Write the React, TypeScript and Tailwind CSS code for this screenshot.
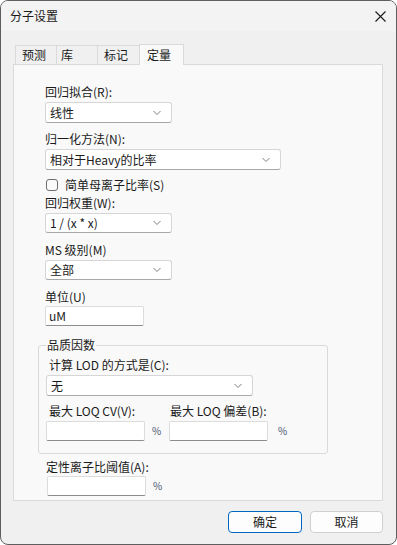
import React from "react";

const font = { fontFamily: '"Noto Sans CJK SC", "Noto Sans", sans-serif' };

function Chevron() {
  return (
    <svg width="8" height="5" viewBox="0 0 8 5" className="absolute right-[10px] top-1/2 -translate-y-1/2">
      <path d="M0.5 0.5 L4 4 L7.5 0.5" fill="none" stroke="#707070" strokeWidth="0.9" />
    </svg>
  );
}

function Select({ value, w, h = 21 }: { value: string; w: string; h?: number }) {
  return (
    <div
      className={`relative ${w} flex items-center bg-white border border-[#d6d6d6] border-b-[#a8a8a8] rounded-[3px] pl-[4px] text-[12px] text-[#1a1a1a]`}
      style={{ height: h }}
    >
      <span className="leading-none">{value}</span>
      <Chevron />
    </div>
  );
}

function Input({ value = "" }: { value?: string }) {
  return (
    <div className="w-[99px] h-[20px] flex items-center bg-white border border-[#dcdcdc] border-b-[#8c8c8c] rounded-[2px] pl-[3px] text-[12px] text-[#1a1a1a] leading-none">
      {value}
    </div>
  );
}

function Label({ children, className = "" }: { children: React.ReactNode; className?: string }) {
  return <div className={`h-[16px] leading-[16px] text-[12px] text-[#1a1a1a] ${className}`}>{children}</div>;
}

function Pct() {
  return <span className="text-[10px] text-[#4a5570] leading-none">%</span>;
}

export default function App() {
  return (
    <div style={font} className="w-[397px] h-[545px] bg-[#f0f0f0] border border-[#5e5e5e] rounded-[8px] overflow-hidden flex flex-col">
      {/* title bar */}
      <div className="h-[30px] bg-[#f3f3f3] flex items-center justify-between pl-[9px] pr-[10px]">
        <span className="text-[12px] text-[#1a1a1a]">分子设置</span>
        <svg width="11" height="11" viewBox="0 0 11 11">
          <path d="M0.5 0.5 L10.5 10.5 M10.5 0.5 L0.5 10.5" stroke="#1a1a1a" strokeWidth="1.1" />
        </svg>
      </div>

      {/* tabs */}
      <div className="mt-[12px] pl-[12px] flex flex-col">
        <div className="flex items-end h-[21px] pl-[2px] relative z-10">
          <div className="w-[42px] h-[19px] border border-b-0 border-[#dadada] text-[12px] leading-[18px] pl-[6px] text-[#1a1a1a]">预测</div>
          <div className="w-[41px] h-[19px] border border-b-0 border-l-0 border-[#dadada] text-[12px] leading-[18px] pl-[4px] text-[#1a1a1a]">库</div>
          <div className="w-[42px] h-[19px] border border-b-0 border-l-0 border-[#dadada] text-[12px] leading-[18px] pl-[6px] text-[#1a1a1a]">标记</div>
          <div className="w-[45px] h-[21px] -ml-[1px] border border-b-0 border-[#dadada] bg-[#f9f9f9] text-[12px] leading-[20px] pl-[7px] text-[#1a1a1a] mb-[-1px]">定量</div>
        </div>

        {/* panel */}
        <div className="w-[370px] h-[437px] bg-[#f9f9f9] border border-[#dadada] flex flex-col pl-[31px] pt-[19px]">
          <Label>回归拟合(R):</Label>
          <div className="mt-[2px]"><Select value="线性" w="w-[127px]" /></div>

          <Label className="mt-[8px]">归一化方法(N):</Label>
          <div className="mt-[2px]"><Select value="相对于Heavy的比率" w="w-[236px]" /></div>

          <div className="mt-[7px] h-[16px] flex items-center">
            <div className="w-[12px] h-[12px] ml-[1px] rounded-[3px] border border-[#6e6e6e] bg-[#fbfbfb]" />
            <span className="ml-[7px] text-[12px] text-[#1a1a1a] leading-[16px]">简单母离子比率(S)</span>
          </div>

          <Label className="mt-[2px]">回归权重(W):</Label>
          <div className="mt-[2px]"><Select value="1 / (x * x)" w="w-[127px]" h={20} /></div>

          <Label className="mt-[9px]">MS 级别(M)</Label>
          <div className="mt-[2px]"><Select value="全部" w="w-[127px]" h={20} /></div>

          <Label className="mt-[9px]">单位(U)</Label>
          <div className="mt-[1px]"><Input value="uM" /></div>

          {/* group box */}
          <div className="relative mt-[19px] -ml-[7px] w-[290px] h-[109px] border border-[#dadada] rounded-[3px]">
            <div className="absolute -top-[9px] left-[7px] px-[1px] bg-[#f9f9f9] text-[12px] leading-[16px] text-[#1a1a1a]">品质因数</div>
            <div className="flex flex-col pl-[7px] pt-[11px]">
              <Label className="pl-[3px]">计算 LOD 的方式是(C):</Label>
              <div className="mt-[2px]"><Select value="无" w="w-[207px]" /></div>
              <div className="mt-[7px] flex">
                <div className="flex flex-col w-[123px]">
                  <Label className="pl-[3px]">最大 LOQ CV(V):</Label>
                  <div className="mt-[2px] flex items-center gap-[7px]">
                    <Input />
                    <Pct />
                  </div>
                </div>
                <div className="flex flex-col">
                  <Label className="pl-[1px]">最大 LOQ 偏差(B):</Label>
                  <div className="mt-[2px] flex items-center gap-[10px]">
                    <Input />
                    <Pct />
                  </div>
                </div>
              </div>
            </div>
          </div>

          <Label className="mt-[5px] pl-[1px]">定性离子比阈值(A):</Label>
          <div className="mt-[1px] ml-[2px] flex items-center gap-[7px]">
            <Input />
            <Pct />
          </div>
        </div>
      </div>

      {/* buttons */}
      <div className="mt-[10px] flex justify-end gap-[8px] pr-[13px]">
        <div className="w-[74px] h-[22px] flex items-center justify-center bg-[#fdfdfd] border border-[#0067c0] rounded-[4px] text-[12px] text-[#1a1a1a]">确定</div>
        <div className="w-[73px] h-[22px] flex items-center justify-center bg-[#fdfdfd] border border-[#d0d0d0] rounded-[4px] text-[12px] text-[#1a1a1a]">取消</div>
      </div>
    </div>
  );
}
